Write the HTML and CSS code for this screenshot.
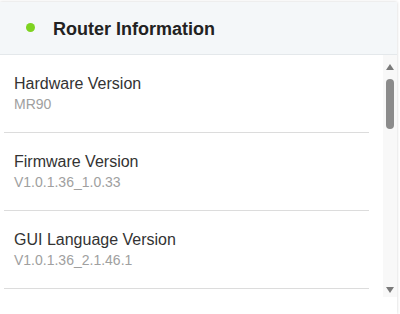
FILE: index.html
```html
<!DOCTYPE html>
<html>
<head>
<meta charset="utf-8">
<link rel="stylesheet" href="styles.css">
</head>
<body>
<div class="card">
  <div class="card-header">
    <span class="dot"></span>
    <span class="title">Router Information</span>
  </div>
  <div class="card-body">
    <ul class="list">
      <li class="item">
        <div class="label">Hardware Version</div>
        <div class="value">MR90</div>
      </li>
      <li class="item">
        <div class="label">Firmware Version</div>
        <div class="value">V1.0.1.36_1.0.33</div>
      </li>
      <li class="item">
        <div class="label">GUI Language Version</div>
        <div class="value">V1.0.1.36_2.1.46.1</div>
      </li>
    </ul>
    <div class="scrollbar">
      <span class="arrow up"></span>
      <div class="track"><div class="thumb"></div></div>
      <span class="arrow down"></span>
    </div>
  </div>
</div>
</body>
</html>
```
FILE: styles.css
```css
html, body {
  margin: 0;
  padding: 0;
  background: #ffffff;
  overflow: hidden;
}
body {
  font-family: "Liberation Sans", Arial, sans-serif;
  padding-top: 2px;
}
.card {
  width: 397px;
  height: 312px;
  background: #ffffff;
  box-shadow: 0 0 3px rgba(0, 0, 0, 0.18);
  display: flex;
  flex-direction: column;
  overflow: hidden;
}
.card-header {
  height: 52px;
  flex: none;
  background: #f4f7f9;
  border-bottom: 1px solid #e4e8eb;
  display: flex;
  align-items: center;
  padding-left: 26px;
  gap: 18px;
}
.dot {
  width: 9px;
  height: 9px;
  border-radius: 50%;
  background: #7ed321;
  margin-top: -2px;
}
.title {
  font-size: 18px;
  font-weight: bold;
  color: #222;
  margin-top: 2px;
}
.card-body {
  flex: 1;
  display: flex;
  align-items: flex-start;
  overflow: hidden;
}
.list {
  list-style: none;
  margin: 0;
  padding: 0 0 0 4px;
  width: 365px;
  flex: none;
}
.item {
  padding: 19px 0 19px 10px;
  border-bottom: 1px solid #dcdcdc;
}
.label {
  font-size: 16px;
  line-height: 20px;
  color: #333;
}
.value {
  font-size: 14px;
  line-height: 18px;
  margin-top: 1px;
  color: #a0a0a0;
}
.scrollbar {
  margin-left: 14px;
  width: 14px;
  height: 242px;
  box-sizing: border-box;
  background: #f8f8f8;
  display: flex;
  flex-direction: column;
  align-items: center;
  padding: 9px 0 4px;
}
.arrow {
  width: 0;
  height: 0;
  border-left: 4.5px solid transparent;
  border-right: 4.5px solid transparent;
}
.arrow.up {
  border-bottom: 6px solid #7a7a7a;
}
.arrow.down {
  border-top: 6px solid #7a7a7a;
}
.track {
  flex: 1;
  width: 100%;
  display: flex;
  justify-content: center;
  padding-top: 9px;
}
.thumb {
  width: 8px;
  height: 50px;
  border-radius: 4px;
  background: #8b8b8b;
}
```
